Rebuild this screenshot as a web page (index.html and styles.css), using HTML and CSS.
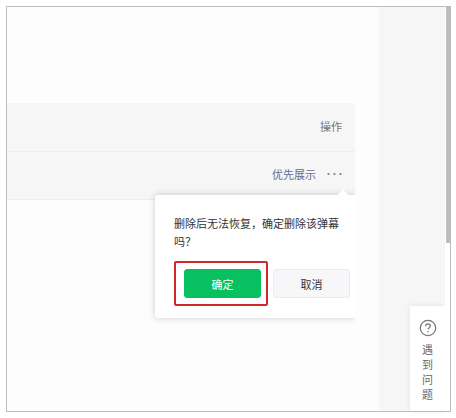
FILE: index.html
```
<!DOCTYPE html>
<html lang="zh-CN">
<head>
    <meta charset="utf-8">
    <meta name="viewport" content="width=device-width, initial-scale=1">
    <link rel="stylesheet" href="styles.css">
    <title>弹幕管理</title>
</head>
<body>
    <div class="window">
        <main class="content">
            <div class="panel">
                <table class="list">
                    <thead>
                        <tr><th scope="col">操作</th></tr>
                    </thead>
                    <tbody>
                        <tr>
                            <td>
                                <div class="actions">
                                    <a href="#">优先展示</a>
                                    <button type="button" class="more" aria-label="更多">
                                        <svg width="15" height="4" viewBox="0 0 15 4" fill="#777a80">
                                            <circle cx="1.5" cy="2" r="1.1" />
                                            <circle cx="7.5" cy="2" r="1.1" />
                                            <circle cx="13.5" cy="2" r="1.1" />
                                        </svg>
                                    </button>
                                </div>
                            </td>
                        </tr>
                    </tbody>
                </table>

                <div class="popover" role="dialog" aria-labelledby="message">
                    <p id="message">删除后无法恢复，确定删除该弹幕吗？</p>
                    <div class="buttons">
                        <div class="highlight">
                            <button type="button" class="btn primary">确定</button>
                        </div>
                        <button type="button" class="btn">取消</button>
                    </div>
                </div>
            </div>
        </main>

        <aside class="side">
            <a class="help" href="#">
                <svg width="18" height="18" viewBox="0 0 18 18" fill="none" stroke="#777" stroke-width="1.2">
                    <circle cx="9" cy="9" r="7.7" />
                    <path d="M6.7 7.2c0-1.4 1-2.3 2.3-2.3s2.3.9 2.3 2.1c0 1.7-2.3 1.8-2.3 3.6" />
                    <circle cx="9" cy="12.7" r=".8" fill="#777" stroke="none" />
                </svg>
                <span>遇到问题</span>
            </a>
        </aside>

        <div class="scrollbar"><div class="thumb"></div></div>
    </div>
</body>
</html>
```
FILE: styles.css
```
* {
    box-sizing: border-box;
}

body {
    margin: 0;
    padding: 6px 5px 6px 6px;
    background: #fff;
    color: #333;
    font: 11px/18px "Noto Sans CJK SC", sans-serif;
}

a {
    text-decoration: none;
}

button {
    font: inherit;
    padding: 0;
    cursor: pointer;
}

.window {
    display: flex;
    min-height: calc(100vh - 12px);
    border: 1px solid #bdbdbd;
}

.content {
    flex: 1;
    display: flex;
    padding-right: 24px;
    background: #fdfdfd;
}

/* the panel cuts off the right edge of the popover */
.panel {
    flex: 1;
    position: relative;
    overflow: hidden;
    padding-top: 96px;
}

.list {
    width: 100%;
    border-collapse: collapse;
    background: #f6f6f6;
}

.list th,
.list td {
    height: 48px;
    padding: 0 13px 2px;
    border-bottom: 1px solid #ededed;
    text-align: right;
    font-weight: normal;
    color: #777;
}

.actions {
    display: flex;
    justify-content: flex-end;
    align-items: center;
    gap: 11px;
}

.actions a {
    color: #666c90;
}

.more {
    display: flex;
    border: 0;
    background: none;
}

.popover {
    position: absolute;
    top: 188px;
    right: 0;
    width: 200px;
    padding: 19px 5px 12px 19px;
    border-radius: 3px 0 0 3px;
    background: #fff;
    box-shadow: 0 0 7px rgba(0, 0, 0, 0.2);
}

.popover::before {
    content: "";
    position: absolute;
    top: -4px;
    right: 8px;
    width: 8px;
    height: 8px;
    background: #fff;
    transform: rotate(45deg);
}

.popover p {
    margin: 0 6px 11px 0;
}

.buttons {
    display: flex;
    align-items: center;
    gap: 5px;
}

.highlight {
    flex: none;
    padding: 6px 5px 6px 8px;
    border: 2px solid #d0282b;
    border-radius: 2px;
}

.btn {
    flex: none;
    display: block;
    width: 77px;
    height: 29px;
    border: 1px solid #ececee;
    border-radius: 3px;
    background: #f7f7f9;
    color: #333;
}

.btn.primary {
    border-color: #07c160;
    background: #07c160;
    color: #fff;
}

.side {
    display: flex;
    align-items: flex-end;
    justify-content: flex-end;
    width: 66px;
    background: #f6f6f6;
}

.help {
    display: flex;
    flex-direction: column;
    align-items: center;
    gap: 5px;
    width: 35px;
    padding: 13px 0 9px;
    background: #fff;
    box-shadow: 0 0 6px rgba(0, 0, 0, 0.08);
    color: #666;
    line-height: 15px;
}

.help span {
    width: 11px;
}

.scrollbar {
    width: 5px;
    padding-left: 1px;
    background: #fff;
}

.thumb {
    height: 236px;
    background: #bdbdbd;
}
```
